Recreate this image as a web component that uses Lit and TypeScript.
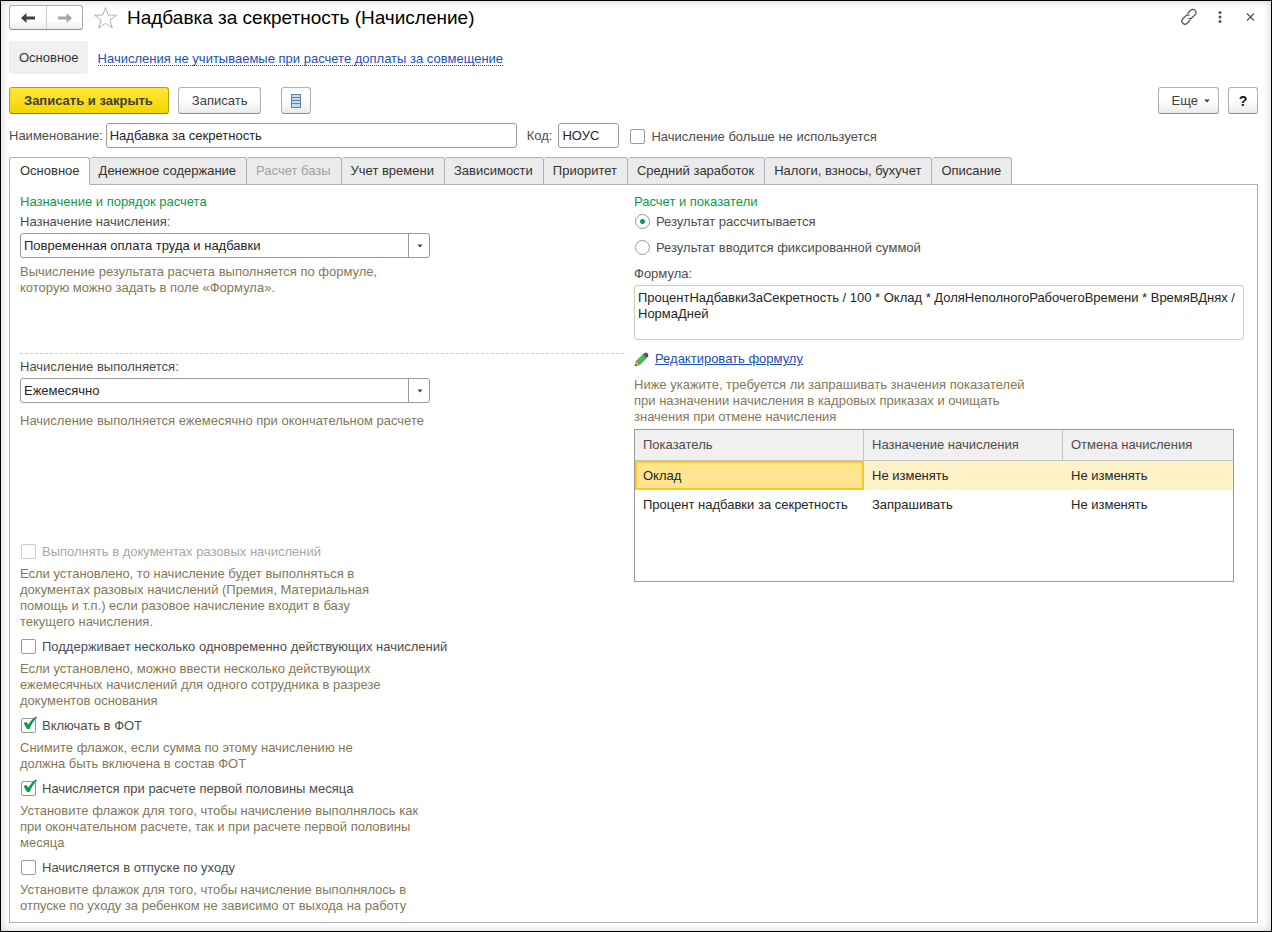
import { LitElement, html, css, svg, nothing } from "lit";
import { customElement, property, state } from "lit/decorators.js";
import { classMap } from "lit/directives/class-map.js";

const controlStyles = css`
  *,
  *::before,
  *::after {
    box-sizing: border-box;
  }
  button,
  input,
  select,
  textarea {
    margin: 0;
    font: inherit;
    color: inherit;
  }
  .row {
    display: flex;
    align-items: flex-start;
    gap: 6px;
    height: 16px;
    padding-left: 1px;
    line-height: 18px;
    color: #4d4d4d;
    white-space: nowrap;
  }
  .row.disabled {
    color: #a8a8a8;
  }
`;

@customElement("check-row")
export class CheckRow extends LitElement {
  @property() label = "";
  @property({ type: Boolean }) checked = false;
  @property({ type: Boolean }) disabled = false;

  static styles = [
    controlStyles,
    css`
      :host {
        display: block;
      }
      .box {
        position: relative;
        display: flex;
        width: 15px;
        height: 15px;
        margin-top: 1px;
      }
      .input {
        appearance: none;
        width: 15px;
        height: 15px;
        border: 1px solid #999;
        border-radius: 2px;
        background: #fff;
      }
      .input:disabled {
        border-color: #ccc;
      }
      .mark {
        position: absolute;
        left: 2px;
        top: -2px;
        pointer-events: none;
      }
    `,
  ];

  private toggle(e: Event) {
    this.checked = (e.target as HTMLInputElement).checked;
  }

  render() {
    return html`<label class=${classMap({ row: true, disabled: this.disabled })}>
      <span class="box">
        <input class="input" type="checkbox" .checked=${this.checked} ?disabled=${this.disabled} @change=${this.toggle} />
        ${this.checked
          ? html`<svg class="mark" width="15" height="15" viewBox="0 0 15 15">
              <path d="M0.5 7 L3.500 6 L5.300 8.800 C7 5.600 9.500 3 13 0.600 L14 1.600 C10.800 5 8.300 8.500 6.500 13 L4 13 Z" fill="#0c9a4c" />
            </svg>`
          : nothing}
      </span>
      <span>${this.label}</span>
    </label>`;
  }
}

@customElement("select-field")
export class SelectField extends LitElement {
  @property() label = "";
  @property({ attribute: false }) options: string[] = [];

  static styles = [
    controlStyles,
    css`
      :host {
        display: block;
        padding-top: 1px;
      }
      .label {
        display: block;
        margin-bottom: 3px;
        color: #4d4d4d;
      }
      .wrap {
        position: relative;
        display: flex;
        max-width: 410px;
      }
      .select {
        appearance: none;
        flex: 1;
        height: 25px;
        padding: 0 26px 0 3px;
        border: 1px solid #999;
        border-radius: 3px;
        background: #fff;
        color: #262626;
      }
      .arrow {
        position: absolute;
        right: 0;
        top: 0;
        bottom: 0;
        width: 22px;
        display: flex;
        align-items: center;
        justify-content: center;
        border-left: 1px solid #999;
        pointer-events: none;
      }
    `,
  ];

  render() {
    return html`<label class="label" for="value">${this.label}</label>
      <div class="wrap">
        <select class="select" id="value">
          ${this.options.map((o) => html`<option>${o}</option>`)}
        </select>
        <span class="arrow"
          ><svg width="6" height="4" viewBox="0 0 6 4"><path d="M0.5 0.500 H5.500 L3 3.500 Z" fill="#404040" /></svg
        ></span>
      </div>`;
  }
}

interface TabItem {
  title: string;
  disabled?: boolean;
}

interface Flag {
  label: string;
  hint: string[];
  checked?: boolean;
  disabled?: boolean;
}

const TABS: TabItem[] = [
  { title: "Основное" },
  { title: "Денежное содержание" },
  { title: "Расчет базы", disabled: true },
  { title: "Учет времени" },
  { title: "Зависимости" },
  { title: "Приоритет" },
  { title: "Средний заработок" },
  { title: "Налоги, взносы, бухучет" },
  { title: "Описание" },
];

const FLAGS: Flag[] = [
  {
    label: "Выполнять в документах разовых начислений",
    disabled: true,
    hint: [
      "Если установлено, то начисление будет выполняться в",
      "документах разовых начислений (Премия, Материальная",
      "помощь и т.п.) если разовое начисление входит в базу",
      "текущего начисления.",
    ],
  },
  {
    label: "Поддерживает несколько одновременно действующих начислений",
    hint: [
      "Если установлено, можно ввести несколько действующих",
      "ежемесячных начислений для одного сотрудника в разрезе",
      "документов основания",
    ],
  },
  {
    label: "Включать в ФОТ",
    checked: true,
    hint: ["Снимите флажок, если сумма по этому начислению не", "должна быть включена в состав ФОТ"],
  },
  {
    label: "Начисляется при расчете первой половины месяца",
    checked: true,
    hint: [
      "Установите флажок для того, чтобы начисление выполнялось как",
      "при окончательном расчете, так и при расчете первой половины",
      "месяца",
    ],
  },
  {
    label: "Начисляется в отпуске по уходу",
    hint: [
      "Установите флажок для того, чтобы начисление выполнялось в",
      "отпуске по уходу за ребенком не зависимо от выхода на работу",
    ],
  },
];

const INDICATORS = [
  ["Оклад", "Не изменять", "Не изменять"],
  ["Процент надбавки за секретность", "Запрашивать", "Не изменять"],
];

const lines = (items: string[]) => items.map((t, i) => html`${i ? html`<br />` : nothing}${t}`);

const arrowShape = svg`<path d="M0 5 L5.500 0 V3.500 H14 V6.500 H5.500 V10 Z" />`;

@customElement("app-root")
export class AppRoot extends LitElement {
  @state() private tab = 0;
  @state() private selected = 0;

  static styles = [
    controlStyles,
    css`
      :host {
        display: block;
        font-family: "Liberation Sans", Arial, sans-serif;
        font-size: 13px;
        line-height: 16px;
        color: #333;
      }
      .window {
        min-height: 100vh;
        display: flex;
        flex-direction: column;
        padding: 4px 13px 8px 8px;
        border: 1px solid #000;
        background: #fff;
        box-shadow: inset 0 0 8px rgba(0, 0, 0, 0.2);
      }
      .title-bar {
        display: flex;
        align-items: center;
        height: 25px;
      }
      .history {
        display: flex;
        height: 25px;
        border: 1px solid #aaa;
        border-bottom-color: #8c8c8c;
        border-radius: 3px;
        background: linear-gradient(#fff 60%, #ececec);
      }
      .history-btn {
        width: 36px;
        padding: 0;
        display: flex;
        align-items: center;
        justify-content: center;
        border: 0;
        background: none;
        fill: #404040;
      }
      .history-btn + .history-btn {
        border-left: 1px solid #ccc;
        fill: #a6a6a6;
      }
      .star {
        margin-left: 10px;
      }
      .plain {
        display: flex;
        padding: 0;
        border: 0;
        background: none;
      }
      .title {
        flex: 1;
        margin: 0 0 0 9px;
        font-size: 19px;
        line-height: 24px;
        font-weight: 400;
        color: #000;
      }
      .window-tools {
        display: flex;
        align-items: center;
        gap: 17px;
        margin-bottom: 2px;
      }
      .sections {
        display: flex;
        align-items: center;
        gap: 10px;
        margin-top: 11px;
      }
      .section {
        height: 33px;
        padding: 0 9px 0 10px;
        display: flex;
        align-items: center;
        border-radius: 3px;
        background: #f0f0f0;
        color: #333;
        text-decoration: none;
      }
      .section-link {
        padding-top: 2px;
        line-height: 13px;
        color: #1a50b8;
        text-decoration: none;
        border-bottom: 1px dotted #1a50b8;
      }
      .toolbar {
        display: flex;
        gap: 9px;
        margin-top: 13px;
      }
      .btn {
        height: 27px;
        padding: 0 13px;
        display: flex;
        align-items: center;
        justify-content: center;
        gap: 6px;
        border: 1px solid #b0b0b0;
        border-bottom-color: #8c8c8c;
        border-radius: 3px;
        background: linear-gradient(#fff 50%, #ebebeb);
        color: #404040;
      }
      .btn.primary {
        padding: 0 15px 0 14px;
        font-weight: 700;
        border-color: #b8a000;
        border-bottom-color: #8f7c00;
        background: linear-gradient(#ffe838, #f4d400);
      }
      .btn.icon {
        width: 30px;
        padding: 0;
      }
      .btn.list {
        margin-left: 11px;
      }
      .btn.more {
        margin-left: auto;
        padding: 0 8px 0 13px;
      }
      .btn.help {
        font-size: 14px;
        font-weight: 700;
        color: #111;
      }
      .fields {
        display: flex;
        align-items: center;
        margin-top: 9px;
        color: #4d4d4d;
      }
      .text {
        height: 25px;
        padding: 0 3px;
        border: 1px solid #999;
        border-radius: 3px;
        background: #fff;
        color: #262626;
      }
      .text.name {
        width: 411px;
        margin: 0 10px 0 3px;
      }
      .text.code {
        width: 61px;
        margin: 0 10px 0 6px;
      }
      .tabs {
        display: flex;
        margin-top: 9px;
        position: relative;
      }
      .tab {
        height: 28px;
        margin-bottom: -1px;
        padding: 0 10px 0 9px;
        border: 1px solid #b0b0b0;
        border-left-width: 0;
        border-radius: 3px 3px 0 0;
        background: #ebebeb;
        color: #333;
        white-space: nowrap;
      }
      .tab:first-child {
        padding: 0 9px 0 10px;
        border-left-width: 1px;
      }
      .tab.active {
        background: #fff;
        border-bottom-color: #fff;
      }
      .tab:disabled {
        color: #a0a0a0;
      }
      .panel {
        flex: 1;
        display: grid;
        grid-template-columns: 604fr 610fr;
        gap: 10px;
        padding: 9px 13px 7px 10px;
        border: 1px solid #b0b0b0;
      }
      .group {
        margin: 0 0 3px;
        font-size: 13px;
        font-weight: 400;
        line-height: 16px;
        color: #0c9a4c;
      }
      .hint {
        margin: 0;
        color: #857858;
      }
      .purpose {
        min-height: 160px;
        border-bottom: 1px dashed #ccc;
      }
      .purpose .hint {
        margin-top: 6px;
      }
      .schedule {
        min-height: 189px;
        padding-top: 4px;
      }
      .schedule .hint {
        margin-top: 10px;
      }
      .flags {
        display: grid;
        gap: 8px;
      }
      .flags .hint {
        margin-top: 7px;
      }
      .radios {
        display: grid;
        gap: 10px;
        margin: 0;
        padding: 0;
        border: 0;
      }
      .radio {
        appearance: none;
        width: 15px;
        height: 15px;
        margin-top: 1px;
        border: 1px solid #999;
        border-radius: 50%;
        background: #fff;
      }
      .radio:checked {
        background: radial-gradient(circle, #0c9a4c 2px, #fff 3px);
      }
      .formula-label {
        display: block;
        margin: 11px 0 3px;
        color: #4d4d4d;
      }
      .formula {
        display: block;
        width: 100%;
        height: 55px;
        padding: 4px 3px;
        border: 1px solid #ccc;
        border-radius: 3px;
        resize: none;
        overflow: hidden;
        background: #fff;
        color: #262626;
      }
      .edit {
        display: flex;
        align-items: center;
        gap: 6px;
        margin: 11px 0 10px;
      }
      .edit-link {
        color: #1a50b8;
      }
      .table-box {
        max-width: 600px;
        height: 153px;
        margin-top: 4px;
        border: 1px solid #999;
      }
      .table {
        width: 100%;
        table-layout: fixed;
        border-collapse: separate;
        border-spacing: 0;
      }
      .c1 {
        width: 229px;
      }
      .c2 {
        width: 199px;
      }
      .head {
        height: 31px;
        padding: 0 8px;
        text-align: left;
        font-weight: 400;
        color: #4d4d4d;
        background: #f0f0f0;
        border-bottom: 1px solid #c4c4c4;
        border-right: 1px solid #c4c4c4;
      }
      .head:last-child {
        border-right: 0;
      }
      .cell {
        height: 29px;
        padding: 0 8px;
        color: #262626;
      }
      .selected .cell {
        background: #fff2c8;
      }
      .selected .cell:first-child {
        background: #ffe590;
        box-shadow: inset 0 0 0 2px #fbc91c;
      }
    `,
  ];

  private renderHeader() {
    return html`<header class="title-bar">
        <div class="history">
          <button class="history-btn" aria-label="Назад"><svg width="14" height="10">${arrowShape}</svg></button>
          <button class="history-btn" aria-label="Вперед">
            <svg width="14" height="10" viewBox="0 0 14 10"><g transform="translate(14 0) scale(-1 1)">${arrowShape}</g></svg>
          </button>
        </div>
        <button class="plain star" aria-label="В избранное">
          <svg width="25" height="24" viewBox="0 0 25 24">
            <path
              d="M12.500 1.500 L15.200 9 L23.500 9.200 L17 14 L19.300 22 L12.500 17.300 L5.700 22 L8 14 L1.500 9.200 L9.800 9 Z"
              fill="#fff"
              stroke="#a9b0b8"
            />
          </svg>
        </button>
        <h1 class="title">Надбавка за секретность (Начисление)</h1>
        <div class="window-tools">
          <button class="plain" aria-label="Получить ссылку">
            <svg width="18" height="18" viewBox="0 0 18 18" fill="none" stroke="#555" stroke-width="1.300">
              <path d="M7.500 5.500 L10.500 2.500 C11.800 1.200 13.800 1.200 15 2.400 C16.200 3.600 16.200 5.600 15 6.900 L12 9.800 C11 10.800 9.300 10.900 8.200 10.200" />
              <path d="M10 12.300 L7.200 15.200 C6 16.400 4 16.400 2.800 15.200 C1.600 14 1.600 12 2.800 10.700 L5.700 7.900 C6.800 6.900 8.400 6.800 9.500 7.500" />
            </svg>
          </button>
          <button class="plain" aria-label="Меню">
            <svg width="10" height="18" viewBox="0 0 10 18" fill="#555">
              <circle cx="5" cy="4.500" r="1.500" /><circle cx="5" cy="9" r="1.500" /><circle cx="5" cy="13.500" r="1.500" />
            </svg>
          </button>
          <button class="plain" aria-label="Закрыть">
            <svg width="16" height="18" viewBox="0 0 16 18" stroke="#555" stroke-width="1.200">
              <path d="M5 5.500 L12 12.500 M12 5.500 L5 12.500" />
            </svg>
          </button>
        </div>
      </header>
      <nav class="sections">
        <a class="section" href="#main">Основное</a>
        <a class="section-link" href="#excluded">Начисления не учитываемые при расчете доплаты за совмещение</a>
      </nav>`;
  }

  private renderToolbar() {
    return html`<div class="toolbar">
        <button class="btn primary">Записать и закрыть</button>
        <button class="btn">Записать</button>
        <button class="btn icon list" aria-label="Реестр">
          <svg width="12" height="16" viewBox="0 0 12 16">
            <rect x="1.500" y="1.500" width="9" height="13" fill="#c3dcec" stroke="#5b86a5" />
            <path d="M2 4.500 H10 M2 7.500 H10 M2 10.500 H10" stroke="#5b86a5" />
          </svg>
        </button>
        <button class="btn more">
          Еще <svg width="6" height="4" viewBox="0 0 6 4"><path d="M0 0.500 H6 L3 3.500 Z" fill="#404040" /></svg>
        </button>
        <button class="btn icon help">?</button>
      </div>
      <div class="fields">
        <label for="name">Наименование:</label>
        <input class="text name" id="name" value="Надбавка за секретность" />
        <label for="code">Код:</label>
        <input class="text code" id="code" value="НОУС" />
        <check-row label="Начисление больше не используется"></check-row>
      </div>`;
  }

  private renderTable() {
    return html`<div class="table-box">
      <table class="table">
        <colgroup>
          <col class="c1" />
          <col class="c2" />
          <col />
        </colgroup>
        <thead>
          <tr>
            <th class="head">Показатель</th>
            <th class="head">Назначение начисления</th>
            <th class="head">Отмена начисления</th>
          </tr>
        </thead>
        <tbody>
          ${INDICATORS.map(
            (row, i) => html`<tr class=${classMap({ selected: i === this.selected })} @click=${() => (this.selected = i)}>
              ${row.map((c) => html`<td class="cell">${c}</td>`)}
            </tr>`
          )}
        </tbody>
      </table>
    </div>`;
  }

  render() {
    return html`<main class="window">
      ${this.renderHeader()} ${this.renderToolbar()}
      <div class="tabs" role="tablist">
        ${TABS.map(
          (t, i) => html`<button
            class=${classMap({ tab: true, active: i === this.tab })}
            role="tab"
            aria-selected=${i === this.tab ? "true" : "false"}
            ?disabled=${t.disabled}
            @click=${() => (this.tab = i)}
          >
            ${t.title}
          </button>`
        )}
      </div>
      <div class="panel" role="tabpanel">
        <section>
          <div class="purpose">
            <h2 class="group">Назначение и порядок расчета</h2>
            <select-field label="Назначение начисления:" .options=${["Повременная оплата труда и надбавки"]}></select-field>
            <p class="hint">${lines(["Вычисление результата расчета выполняется по формуле,", "которую можно задать в поле «Формула»."])}</p>
          </div>
          <div class="schedule">
            <select-field label="Начисление выполняется:" .options=${["Ежемесячно"]}></select-field>
            <p class="hint">Начисление выполняется ежемесячно при окончательном расчете</p>
          </div>
          <div class="flags">
            ${FLAGS.map(
              (f) => html`<div>
                <check-row label=${f.label} ?checked=${f.checked} ?disabled=${f.disabled}></check-row>
                <p class="hint">${lines(f.hint)}</p>
              </div>`
            )}
          </div>
        </section>
        <section>
          <h2 class="group">Расчет и показатели</h2>
          <fieldset class="radios" aria-label="Расчет и показатели">
            <label class="row"><input class="radio" type="radio" name="result" checked />Результат рассчитывается</label>
            <label class="row"><input class="radio" type="radio" name="result" />Результат вводится фиксированной суммой</label>
          </fieldset>
          <label class="formula-label" for="formula">Формула:</label>
          <textarea
            class="formula"
            id="formula"
            .value=${"ПроцентНадбавкиЗаСекретность / 100 * Оклад * ДоляНеполногоРабочегоВремени * ВремяВДнях / НормаДней"}
          ></textarea>
          <div class="edit">
            <svg width="15" height="15" viewBox="0 0 15 15">
              <path d="M1 14 L2.500 9 L6 12.500 Z" fill="#f2b866" stroke="#8a5a2b" stroke-width="0.600" />
              <path d="M1 14 L1.600 12 L3 13.400 Z" fill="#333" />
              <path d="M2.500 9 L9 2.500 L12.500 6 L6 12.500 Z" fill="#4fb95f" stroke="#2c7a3c" stroke-width="0.600" />
              <path d="M9 2.500 L10.800 0.800 H13 L14.200 2 V4.200 L12.500 6 Z" fill="#4a5560" />
            </svg>
            <a class="edit-link" href="#formula">Редактировать формулу</a>
          </div>
          <p class="hint">
            ${lines([
              "Ниже укажите, требуется ли запрашивать значения показателей",
              "при назначении начисления в кадровых приказах и очищать",
              "значения при отмене начисления",
            ])}
          </p>
          ${this.renderTable()}
        </section>
      </div>
    </main>`;
  }
}
